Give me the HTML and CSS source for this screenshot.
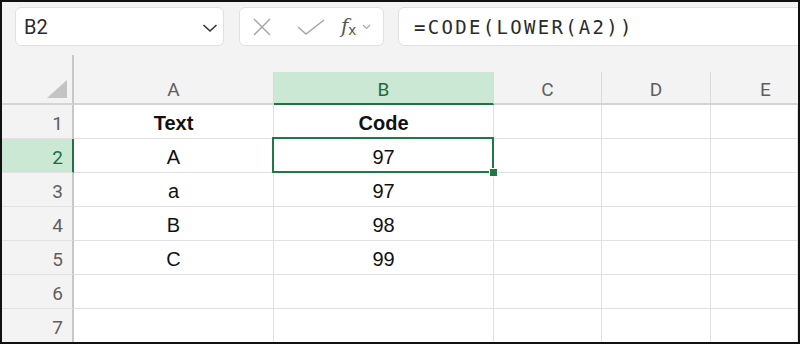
FILE: index.html
```html
<!DOCTYPE html>
<html lang="en">
<head>
    <meta charset="UTF-8">
    <title>CODE LOWER</title>
    <link rel="stylesheet" href="styles.css">
</head>
<body>
    <div class="frame">
        <div class="toolbar">
            <div class="namebox">
                <span class="name">B2</span>
                <svg class="chevron" width="16" height="10" viewBox="0 0 16 10"><path d="M1.5 2 L8 8 L14.5 2" fill="none" stroke="#333" stroke-width="1.6"/></svg>
            </div>
            <div class="fxbox">
                <svg class="icon" width="20" height="18" viewBox="0 0 20 18"><path d="M2 1 L18 17 M18 1 L2 17" stroke="#a6a6a6" stroke-width="1.5" fill="none"/></svg>
                <svg class="icon" width="28" height="16" viewBox="0 0 28 16"><path d="M1 8 L9 15 L27 1" stroke="#a6a6a6" stroke-width="1.5" fill="none"/></svg>
                <span class="fx">f<sub>x</sub></span>
                <svg class="small-chevron" width="9" height="6" viewBox="0 0 9 6"><path d="M1 1 L4.5 4.5 L8 1" fill="none" stroke="#aaa" stroke-width="1.2"/></svg>
            </div>
            <div class="formula">=CODE(LOWER(A2))</div>
        </div>
        <div class="sheet">
            <div class="corner"><div class="triangle"></div></div>
            <div class="col-head"><div class="col-label">A</div></div>
            <div class="col-head"><div class="col-label active">B</div></div>
            <div class="col-head"><div class="col-label">C</div></div>
            <div class="col-head"><div class="col-label">D</div></div>
            <div class="col-head"><div class="col-label last">E</div></div>

            <div class="row-head">1</div>
            <div class="cell bold">Text</div>
            <div class="cell bold">Code</div>
            <div class="cell"></div><div class="cell"></div><div class="cell"></div>

            <div class="row-head active">2</div>
            <div class="cell">A</div>
            <div class="cell selected">97<span class="handle"></span></div>
            <div class="cell"></div><div class="cell"></div><div class="cell"></div>

            <div class="row-head">3</div>
            <div class="cell">a</div>
            <div class="cell">97</div>
            <div class="cell"></div><div class="cell"></div><div class="cell"></div>

            <div class="row-head">4</div>
            <div class="cell">B</div>
            <div class="cell">98</div>
            <div class="cell"></div><div class="cell"></div><div class="cell"></div>

            <div class="row-head">5</div>
            <div class="cell">C</div>
            <div class="cell">99</div>
            <div class="cell"></div><div class="cell"></div><div class="cell"></div>

            <div class="row-head">6</div>
            <div class="cell"></div><div class="cell"></div>
            <div class="cell"></div><div class="cell"></div><div class="cell"></div>

            <div class="row-head">7</div>
            <div class="cell"></div><div class="cell"></div>
            <div class="cell"></div><div class="cell"></div><div class="cell"></div>
        </div>
    </div>
</body>
</html>
```

FILE: styles.css
```css
body, html {
    margin: 0;
    padding: 0;
    background: #fff;
}
.frame {
    width: 800px;
    height: 344px;
    box-sizing: border-box;
    border: 2px solid #111;
    overflow: hidden;
    font-family: 'Roboto', 'Liberation Sans', sans-serif;
}
.toolbar {
    height: 53px;
    box-sizing: border-box;
    background: #f3f3f3;
    display: flex;
    align-items: flex-start;
    padding: 5px 0 0 13px;
}
.namebox, .fxbox, .formula {
    height: 39px;
    box-sizing: border-box;
    background: #fff;
    border: 1px solid #e0e0e0;
    border-radius: 6px;
    display: flex;
    align-items: center;
}
.namebox {
    width: 209px;
    padding: 0 5px 0 8px;
    justify-content: space-between;
}
.name {
    font-size: 20px;
    color: #2b2b2b;
}
.chevron {
    margin-top: 2px;
}
.fxbox {
    width: 145px;
    margin-left: 15px;
    padding-left: 12px;
}
.fxbox .icon:nth-child(2) {
    margin-left: 25px;
}
.fx {
    margin-left: 16px;
    font-family: 'DejaVu Serif', serif;
    font-style: italic;
    font-size: 20px;
    color: #555;
    line-height: 1;
}
.fx sub {
    font-style: normal;
    font-family: 'Liberation Sans', sans-serif;
    font-size: 15px;
    vertical-align: -2px;
}
.small-chevron {
    margin-left: 6px;
}
.formula {
    flex: 1;
    margin-left: 14px;
    margin-right: -10px;
    padding-left: 15px;
    font-family: 'DejaVu Sans Mono', monospace;
    font-size: 19px;
    letter-spacing: 2.3px;
    color: #2b2b2b;
}
.sheet {
    display: grid;
    grid-template-columns: 72px 200px 220px 108px 109px 1fr;
    grid-template-rows: 50px repeat(7, 34px);
    font-size: 19px;
}
.corner {
    background: #f3f3f3;
    border-right: 2px solid #c8c8c8;
    border-bottom: 2px solid #d4d4d4;
    display: flex;
    justify-content: flex-end;
    align-items: flex-end;
    padding: 0 5px 5px 0;
}
.triangle {
    width: 20px;
    height: 18px;
    background: #c4c4c4;
    clip-path: polygon(100% 0, 100% 100%, 0 100%);
}
.col-head {
    background: #f3f3f3;
    border-bottom: 2px solid #d4d4d4;
    display: flex;
    align-items: flex-end;
}
.col-label {
    flex: 1;
    height: 31px;
    border-right: 1px solid #dadada;
    color: #5f5f5f;
    display: flex;
    align-items: center;
    justify-content: center;
    padding-top: 3px;
    box-sizing: border-box;
}
.col-label.active {
    background: #cae8d4;
    color: #1d6b3f;
    border-bottom: 2px solid #217346;
    margin-bottom: -2px;
    height: 33px;
}
.col-label.last {
    border-right: none;
    justify-content: flex-start;
    padding-left: 49px;
}
.row-head {
    background: #f3f3f3;
    border-right: 2px solid #c8c8c8;
    border-bottom: 1px solid #e1e1e1;
    color: #5f5f5f;
    display: flex;
    align-items: center;
    justify-content: flex-end;
    padding: 4px 9px 0 0;
}
.row-head.active {
    background: #cae8d4;
    color: #1d6b3f;
    border-right-color: #217346;
}
.cell {
    border-right: 1px solid #e1e1e1;
    border-bottom: 1px solid #e1e1e1;
    display: flex;
    align-items: center;
    justify-content: center;
    padding-top: 4px;
    font-family: 'Liberation Sans', Arial, sans-serif;
    font-size: 20px;
    color: #111;
    position: relative;
}
.cell.bold {
    font-weight: bold;
}
.cell.selected::after {
    content: '';
    position: absolute;
    left: -2px;
    top: -2px;
    right: -1px;
    bottom: -1px;
    border: 2px solid #1e7a45;
}
.handle {
    position: absolute;
    right: -5px;
    bottom: -5px;
    width: 7px;
    height: 7px;
    background: #1e7a45;
    border: 1px solid #fff;
    z-index: 1;
}
```
